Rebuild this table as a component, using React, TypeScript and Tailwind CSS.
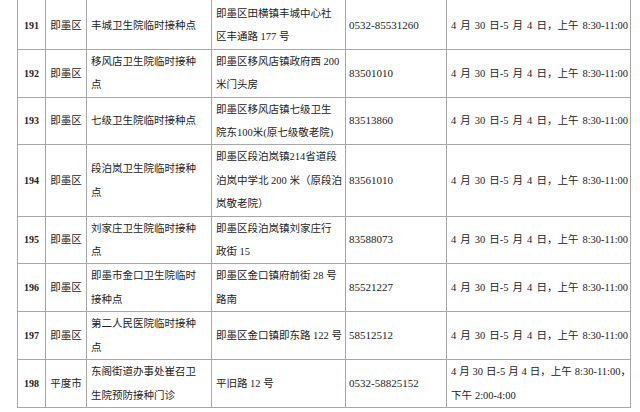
import React from "react";

type Row = {
  no: string;
  area: string;
  name: string[];
  addr: string[];
  phone: string;
  time: string[];
};

const T = "4 月 30 日-5 月 4 日，上午 8:30-11:00";

const rows: Row[] = [
  { no: "191", area: "即墨区", name: ["丰城卫生院临时接种点"], addr: ["即墨区田横镇丰城中心社", "区丰通路 177 号"], phone: "0532-85531260", time: [T] },
  { no: "192", area: "即墨区", name: ["移风店卫生院临时接种", "点"], addr: ["即墨区移风店镇政府西 200", "米门头房"], phone: "83501010", time: [T] },
  { no: "193", area: "即墨区", name: ["七级卫生院临时接种点"], addr: ["即墨区移风店镇七级卫生", "院东100米(原七级敬老院)"], phone: "83513860", time: [T] },
  { no: "194", area: "即墨区", name: ["段泊岚卫生院临时接种", "点"], addr: ["即墨区段泊岚镇214省道段", "泊岚中学北 200 米（原段泊", "岚敬老院）"], phone: "83561010", time: [T] },
  { no: "195", area: "即墨区", name: ["刘家庄卫生院临时接种", "点"], addr: ["即墨区段泊岚镇刘家庄行", "政街 15"], phone: "83588073", time: [T] },
  { no: "196", area: "即墨区", name: ["即墨市金口卫生院临时", "接种点"], addr: ["即墨区金口镇府前街 28 号", "路南"], phone: "85521227", time: [T] },
  { no: "197", area: "即墨区", name: ["第二人民医院临时接种", "点"], addr: ["即墨区金口镇即东路 122 号"], phone: "58512512", time: [T] },
  { no: "198", area: "平度市", name: ["东阁街道办事处崔召卫", "生院预防接种门诊"], addr: ["平旧路 12 号"], phone: "0532-58825152", time: [T + "，", "下午 2:00-4:00"] },
];

const Lines = ({ lines }: { lines: string[] }) => (
  <div className="flex flex-col">
    {lines.map((l, i) => (
      <div key={i} className="whitespace-nowrap">
        {l}
      </div>
    ))}
  </div>
);

export default function App() {
  return (
    <div
      className="w-[640px] h-[412px] bg-white overflow-hidden text-[#222] text-[10.5px] leading-[23.4px]"
      style={{ fontFamily: '"Liberation Serif", "Noto Sans CJK SC", serif' }}
    >
      <div className="ml-[17px] w-[614px] border-l border-[#a8a8a8] grid grid-cols-[28px_41px_125px_134px_101px_184px]">
        {rows.map((r, idx) => {
          const first = idx === 0 ? "pt-[2px]" : "";
          const cell = `border-r border-b border-[#a8a8a8] flex items-center ${first}`;
          const ws = r.time.length > 1 ? "[word-spacing:0.3px]" : "[word-spacing:1.4px]";
          return (
            <React.Fragment key={r.no}>
              <div className={`${cell} justify-center font-bold text-[10px]`}>{r.no}</div>
              <div className={`${cell} justify-center`}>{r.area}</div>
              <div className={`${cell} pl-[4px]`}>
                <Lines lines={r.name} />
              </div>
              <div className={`${cell} pl-[4px]`}>
                <Lines lines={r.addr} />
              </div>
              <div className={`${cell} pl-[3px] text-[11px]`}>{r.phone}</div>
              <div className={`${cell} pl-[4px] ${ws}`}>
                <Lines lines={r.time} />
              </div>
            </React.Fragment>
          );
        })}
      </div>
    </div>
  );
}
